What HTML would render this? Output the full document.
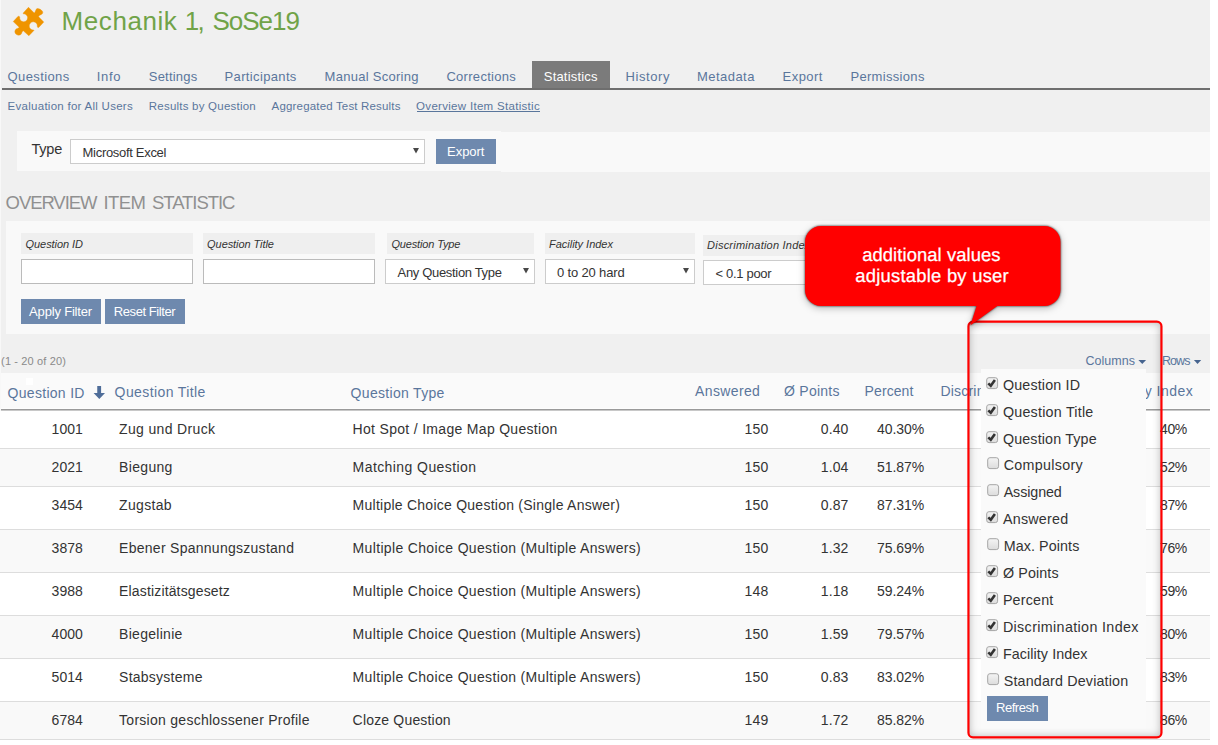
<!DOCTYPE html>
<html><head><meta charset="utf-8"><title>Overview Item Statistic</title>
<style>
html,body{margin:0;padding:0}
body{width:1218px;height:745px;position:relative;overflow:hidden;background:#f0f0f0;font-family:"Liberation Sans",sans-serif}
#p div,#p span,#p svg{position:absolute;display:block}
#p span{white-space:pre;line-height:1}
</style></head><body><div id="p">
<div style="left:0px;top:0px;width:1px;height:745px;background:#f8f8f8"></div>
<div style="left:1px;top:0px;width:1209px;height:745px;background:#f0f0f0"></div>
<div style="left:1210px;top:0px;width:8px;height:745px;background:#fff"></div>
<div style="left:532px;top:61px;width:78px;height:28px;background:#7b7b7b"></div>
<div style="left:2px;top:88px;width:1208px;height:2px;background:#6e6e6e"></div>
<div style="left:416.5px;top:111px;width:123px;height:1px;background:#5a769c"></div>
<div style="left:17px;top:131px;width:484px;height:40px;background:#f9f9f9"></div>
<div style="left:501px;top:132px;width:709px;height:40px;background:#f9f9f9"></div>
<div style="left:70px;top:139px;width:355px;height:25px;background:#fff;border:1px solid #ccc;box-sizing:border-box"></div>
<svg style="left:412.5px;top:148px" width="6" height="6"><path d="M0 0H6L3 5.5Z" fill="#484848"/></svg>
<div style="left:436px;top:139px;width:59.5px;height:25px;background:#6e89ae"></div>
<div style="left:6px;top:221px;width:1204px;height:113px;background:#f9f9f9"></div>
<div style="left:21px;top:233.2px;width:171.5px;height:21px;background:#efefef"></div>
<div style="left:202.5px;top:233.2px;width:172.0px;height:21px;background:#efefef"></div>
<div style="left:386.8px;top:233.2px;width:147.7px;height:21px;background:#efefef"></div>
<div style="left:545px;top:233.2px;width:149.5px;height:21px;background:#efefef"></div>
<div style="left:703px;top:234.5px;width:157px;height:21px;background:#efefef"></div>
<div style="left:21px;top:259px;width:171.5px;height:25px;background:#fff;border:1px solid #bbb;box-sizing:border-box"></div>
<div style="left:202.5px;top:259px;width:172px;height:25px;background:#fff;border:1px solid #bbb;box-sizing:border-box"></div>
<div style="left:385px;top:259px;width:149.5px;height:25px;background:#fff;border:1px solid #ccc;box-sizing:border-box"></div>
<div style="left:545px;top:259px;width:149.5px;height:25px;background:#fff;border:1px solid #ccc;box-sizing:border-box"></div>
<div style="left:703px;top:260px;width:149.5px;height:25px;background:#fff;border:1px solid #ccc;box-sizing:border-box"></div>
<svg style="left:522.7px;top:268px" width="6" height="6"><path d="M0 0H6L3 5.5Z" fill="#484848"/></svg>
<svg style="left:683px;top:268px" width="6" height="6"><path d="M0 0H6L3 5.5Z" fill="#484848"/></svg>
<div style="left:21px;top:299px;width:80px;height:25px;background:#6e89ae"></div>
<div style="left:104.8px;top:299px;width:80px;height:25px;background:#6e89ae"></div>
<svg style="left:1138px;top:360px" width="9" height="5"><path d="M0.4 0H8.1L4.25 4.1Z" fill="#46648f"/></svg>
<svg style="left:1193px;top:360px" width="9" height="5"><path d="M0.9 0H8.2L4.55 4.1Z" fill="#46648f"/></svg>
<div style="left:1px;top:373px;width:1209px;height:35px;background:#fafafa"></div>
<div style="left:1px;top:408px;width:1209px;height:1px;background:#fdfdfd"></div>
<div style="left:1px;top:409px;width:1209px;height:1px;background:#9a9a9a"></div>
<div style="left:1px;top:410px;width:1209px;height:1px;background:#c8c8c8"></div>
<div style="left:25.5px;top:378.3px;width:7px;height:7px;background:#fff"></div>
<div style="left:0px;top:411px;width:1210px;height:37px;background:#fff"></div>
<div style="left:0px;top:448px;width:1210px;height:1px;background:#ddd"></div>
<div style="left:0px;top:449px;width:1210px;height:37px;background:#f9f9f9"></div>
<div style="left:0px;top:486px;width:1210px;height:1px;background:#ddd"></div>
<div style="left:0px;top:487px;width:1210px;height:42px;background:#fff"></div>
<div style="left:0px;top:529px;width:1210px;height:1px;background:#ddd"></div>
<div style="left:0px;top:530px;width:1210px;height:42px;background:#f9f9f9"></div>
<div style="left:0px;top:572px;width:1210px;height:1px;background:#ddd"></div>
<div style="left:0px;top:573px;width:1210px;height:42px;background:#fff"></div>
<div style="left:0px;top:615px;width:1210px;height:1px;background:#ddd"></div>
<div style="left:0px;top:616px;width:1210px;height:42px;background:#f9f9f9"></div>
<div style="left:0px;top:658px;width:1210px;height:1px;background:#ddd"></div>
<div style="left:0px;top:659px;width:1210px;height:42px;background:#fff"></div>
<div style="left:0px;top:701px;width:1210px;height:1px;background:#ddd"></div>
<div style="left:0px;top:702px;width:1210px;height:37px;background:#f9f9f9"></div>
<div style="left:0px;top:739px;width:1210px;height:1px;background:#ddd"></div>
<div style="left:0px;top:740px;width:1210px;height:5px;background:#fff"></div>
<svg style="left:93px;top:386px" width="13" height="14" viewBox="0 0 13 14"><path d="M4.25 0H8.1V7.1H12L6.3 13L0.6 7.1H4.25Z" fill="#4f6d99"/></svg>
<svg style="left:10px;top:3px" width="37" height="37" viewBox="0 0 745 745"><path fill="#ef9400" stroke="#ef9400" stroke-width="8" stroke-linejoin="round" d="M372 86L488 202C508 188 514 150 532 122C556 98 626 126 654 168C672 204 650 228 612 240C590 248 578 262 576 278L680 385L578 492C562 501 552 492 550 472A82 82 0 1 0 478 543L481 554L380 660L268 560C248 568 242 590 232 615C215 658 150 658 117 625C87 590 92 545 130 520C160 508 180 500 186 488L65 375L160 270C178 262 192 268 196 285A80 80 0 1 0 268 219L266 202Z"/></svg>
<span style="left:61.6px;top:8.2px;font-size:26px;color:#70a348;letter-spacing:0.57px;">Mechanik</span>
<span style="left:184.8px;top:8.2px;font-size:26px;color:#70a348;letter-spacing:-1.69px;">1,</span>
<span style="left:212.4px;top:8.2px;font-size:26px;color:#70a348;letter-spacing:-1.01px;">SoSe19</span>
<span style="left:7.6px;top:70.2px;font-size:13px;color:#5a769c;letter-spacing:0.38px;">Questions</span>
<span style="left:96.8px;top:70.2px;font-size:13px;color:#5a769c;letter-spacing:0.70px;">Info</span>
<span style="left:148.8px;top:70.2px;font-size:13px;color:#5a769c;letter-spacing:0.20px;">Settings</span>
<span style="left:224.6px;top:70.2px;font-size:13px;color:#5a769c;letter-spacing:0.35px;">Participants</span>
<span style="left:324.6px;top:70.2px;font-size:13px;color:#5a769c;letter-spacing:0.27px;">Manual Scoring</span>
<span style="left:446.4px;top:70.2px;font-size:13px;color:#5a769c;letter-spacing:0.30px;">Corrections</span>
<span style="left:543.8px;top:70.2px;font-size:13px;color:#fff;letter-spacing:0.18px;">Statistics</span>
<span style="left:625.6px;top:70.2px;font-size:13px;color:#5a769c;letter-spacing:0.56px;">History</span>
<span style="left:697.1px;top:70.2px;font-size:13px;color:#5a769c;letter-spacing:0.44px;">Metadata</span>
<span style="left:782.6px;top:70.2px;font-size:13px;color:#5a769c;letter-spacing:0.44px;">Export</span>
<span style="left:850.4px;top:70.2px;font-size:13px;color:#5a769c;letter-spacing:0.32px;">Permissions</span>
<span style="left:7.6px;top:100.5px;font-size:11.5px;color:#5a769c;letter-spacing:0.27px;">Evaluation for All Users</span>
<span style="left:148.8px;top:100.5px;font-size:11.5px;color:#5a769c;letter-spacing:0.22px;">Results by Question</span>
<span style="left:271.6px;top:100.5px;font-size:11.5px;color:#5a769c;letter-spacing:0.17px;">Aggregated Test Results</span>
<span style="left:416.1px;top:100.5px;font-size:11.5px;color:#5a769c;letter-spacing:0.30px;">Overview Item Statistic</span>
<span style="left:31.4px;top:141.9px;font-size:14.5px;color:#333;letter-spacing:-0.21px;">Type</span>
<span style="left:82.6px;top:146.2px;font-size:13px;color:#333;letter-spacing:-0.31px;">Microsoft Excel</span>
<span style="left:447.1px;top:145.2px;font-size:13px;color:#fff;letter-spacing:-0.06px;">Export</span>
<span style="left:5.6px;top:193.5px;font-size:18.5px;color:#909090;letter-spacing:-1.08px;">OVERVIEW</span>
<span style="left:103.6px;top:193.5px;font-size:18.5px;color:#909090;letter-spacing:-0.63px;">ITEM</span>
<span style="left:152.1px;top:193.5px;font-size:18.5px;color:#909090;letter-spacing:-1.07px;">STATISTIC</span>
<span style="left:25.6px;top:238.9px;font-size:11px;color:#333;letter-spacing:-0.08px;font-style:italic">Question ID</span>
<span style="left:207.1px;top:238.9px;font-size:11px;color:#333;letter-spacing:-0.07px;font-style:italic">Question Title</span>
<span style="left:391.4px;top:238.9px;font-size:11px;color:#333;letter-spacing:-0.14px;font-style:italic">Question Type</span>
<span style="left:549.1px;top:238.9px;font-size:11px;color:#333;letter-spacing:-0.03px;font-style:italic">Facility Index</span>
<span style="left:707.1px;top:239.9px;font-size:11px;color:#333;letter-spacing:0.22px;font-style:italic">Discrimination Index</span>
<span style="left:397.6px;top:266.2px;font-size:13px;color:#333;letter-spacing:-0.33px;">Any Question Type</span>
<span style="left:557.1px;top:266.2px;font-size:13px;color:#333;letter-spacing:-0.17px;">0 to 20 hard</span>
<span style="left:715.4px;top:267.2px;font-size:13px;color:#333;letter-spacing:-0.30px;">&lt; 0.1 poor</span>
<span style="left:29.1px;top:305.2px;font-size:13px;color:#fff;letter-spacing:-0.18px;">Apply Filter</span>
<span style="left:113.8px;top:305.2px;font-size:13px;color:#fff;letter-spacing:-0.42px;">Reset Filter</span>
<span style="left:1.1px;top:355.9px;font-size:11px;color:#8a8a8a;letter-spacing:0.14px;">(1 - 20 of 20)</span>
<span style="left:1085.4px;top:354.6px;font-size:12.5px;color:#5a769c;letter-spacing:0.03px;">Columns</span>
<span style="left:1161.9px;top:354.6px;font-size:12.5px;color:#5a769c;letter-spacing:-0.92px;">Rows</span>
<span style="left:7.6px;top:386.3px;font-size:14px;color:#5a769c;letter-spacing:0.29px;">Question ID</span>
<span style="left:114.6px;top:385.3px;font-size:14px;color:#5a769c;letter-spacing:0.40px;">Question Title</span>
<span style="left:350.6px;top:386.3px;font-size:14px;color:#5a769c;letter-spacing:0.31px;">Question Type</span>
<span style="left:695.1px;top:384.3px;font-size:14px;color:#5a769c;letter-spacing:0.36px;">Answered</span>
<span style="left:784.1px;top:384.3px;font-size:14px;color:#5a769c;letter-spacing:0.23px;">Ø Points</span>
<span style="left:864.6px;top:384.3px;font-size:14px;color:#5a769c;letter-spacing:0.09px;">Percent</span>
<span style="left:940.4px;top:384.3px;font-size:14px;color:#5a769c;letter-spacing:0.21px;">Discrimination Index</span>
<span style="left:1105.1px;top:384.3px;font-size:14px;color:#5a769c;letter-spacing:0.45px;">Facility Index</span>
<span style="left:51.6px;top:422.3px;font-size:14px;color:#333;letter-spacing:0.05px;">1001</span>
<span style="left:119.1px;top:422.3px;font-size:14px;color:#333;letter-spacing:0.34px;">Zug und Druck</span>
<span style="left:352.6px;top:422.3px;font-size:14px;color:#333;letter-spacing:0.31px;">Hot Spot / Image Map Question</span>
<span style="left:744.6px;top:422.3px;font-size:14px;color:#333;letter-spacing:0.22px;">150</span>
<span style="left:820.8px;top:422.3px;font-size:14px;color:#333;letter-spacing:0.12px;">0.40</span>
<span style="left:877.1px;top:422.3px;font-size:14px;color:#333;letter-spacing:-0.08px;">40.30%</span>
<span style="left:1160.1px;top:422.3px;font-size:14px;color:#333;letter-spacing:-0.47px;">40%</span>
<span style="left:51.6px;top:460.3px;font-size:14px;color:#333;letter-spacing:0.05px;">2021</span>
<span style="left:119.1px;top:460.3px;font-size:14px;color:#333;letter-spacing:0.32px;">Biegung</span>
<span style="left:352.6px;top:460.3px;font-size:14px;color:#333;letter-spacing:0.42px;">Matching Question</span>
<span style="left:744.6px;top:460.3px;font-size:14px;color:#333;letter-spacing:0.22px;">150</span>
<span style="left:820.8px;top:460.3px;font-size:14px;color:#333;letter-spacing:0.12px;">1.04</span>
<span style="left:877.1px;top:460.3px;font-size:14px;color:#333;letter-spacing:-0.08px;">51.87%</span>
<span style="left:1160.1px;top:460.3px;font-size:14px;color:#333;letter-spacing:-0.47px;">52%</span>
<span style="left:51.6px;top:498.3px;font-size:14px;color:#333;letter-spacing:0.05px;">3454</span>
<span style="left:119.1px;top:498.3px;font-size:14px;color:#333;letter-spacing:0.32px;">Zugstab</span>
<span style="left:352.6px;top:498.3px;font-size:14px;color:#333;letter-spacing:0.25px;">Multiple Choice Question (Single Answer)</span>
<span style="left:744.6px;top:498.3px;font-size:14px;color:#333;letter-spacing:0.22px;">150</span>
<span style="left:820.8px;top:498.3px;font-size:14px;color:#333;letter-spacing:0.12px;">0.87</span>
<span style="left:877.1px;top:498.3px;font-size:14px;color:#333;letter-spacing:-0.08px;">87.31%</span>
<span style="left:1160.1px;top:498.3px;font-size:14px;color:#333;letter-spacing:-0.47px;">87%</span>
<span style="left:51.6px;top:541.3px;font-size:14px;color:#333;letter-spacing:0.05px;">3878</span>
<span style="left:119.1px;top:541.3px;font-size:14px;color:#333;letter-spacing:0.27px;">Ebener Spannungszustand</span>
<span style="left:352.6px;top:541.3px;font-size:14px;color:#333;letter-spacing:0.34px;">Multiple Choice Question (Multiple Answers)</span>
<span style="left:744.6px;top:541.3px;font-size:14px;color:#333;letter-spacing:0.22px;">150</span>
<span style="left:820.8px;top:541.3px;font-size:14px;color:#333;letter-spacing:0.12px;">1.32</span>
<span style="left:877.1px;top:541.3px;font-size:14px;color:#333;letter-spacing:-0.08px;">75.69%</span>
<span style="left:1160.1px;top:541.3px;font-size:14px;color:#333;letter-spacing:-0.47px;">76%</span>
<span style="left:51.6px;top:584.3px;font-size:14px;color:#333;letter-spacing:0.05px;">3988</span>
<span style="left:119.1px;top:584.3px;font-size:14px;color:#333;letter-spacing:0.15px;">Elastizitätsgesetz</span>
<span style="left:352.6px;top:584.3px;font-size:14px;color:#333;letter-spacing:0.34px;">Multiple Choice Question (Multiple Answers)</span>
<span style="left:744.6px;top:584.3px;font-size:14px;color:#333;letter-spacing:0.22px;">148</span>
<span style="left:820.8px;top:584.3px;font-size:14px;color:#333;letter-spacing:0.12px;">1.18</span>
<span style="left:877.1px;top:584.3px;font-size:14px;color:#333;letter-spacing:-0.08px;">59.24%</span>
<span style="left:1160.1px;top:584.3px;font-size:14px;color:#333;letter-spacing:-0.47px;">59%</span>
<span style="left:51.6px;top:627.3px;font-size:14px;color:#333;letter-spacing:0.05px;">4000</span>
<span style="left:119.1px;top:627.3px;font-size:14px;color:#333;letter-spacing:0.28px;">Biegelinie</span>
<span style="left:352.6px;top:627.3px;font-size:14px;color:#333;letter-spacing:0.34px;">Multiple Choice Question (Multiple Answers)</span>
<span style="left:744.6px;top:627.3px;font-size:14px;color:#333;letter-spacing:0.22px;">150</span>
<span style="left:820.8px;top:627.3px;font-size:14px;color:#333;letter-spacing:0.12px;">1.59</span>
<span style="left:877.1px;top:627.3px;font-size:14px;color:#333;letter-spacing:-0.08px;">79.57%</span>
<span style="left:1160.1px;top:627.3px;font-size:14px;color:#333;letter-spacing:-0.47px;">80%</span>
<span style="left:51.6px;top:670.3px;font-size:14px;color:#333;letter-spacing:0.05px;">5014</span>
<span style="left:119.1px;top:670.3px;font-size:14px;color:#333;letter-spacing:0.24px;">Stabsysteme</span>
<span style="left:352.6px;top:670.3px;font-size:14px;color:#333;letter-spacing:0.34px;">Multiple Choice Question (Multiple Answers)</span>
<span style="left:744.6px;top:670.3px;font-size:14px;color:#333;letter-spacing:0.22px;">150</span>
<span style="left:820.8px;top:670.3px;font-size:14px;color:#333;letter-spacing:0.12px;">0.83</span>
<span style="left:877.1px;top:670.3px;font-size:14px;color:#333;letter-spacing:-0.08px;">83.02%</span>
<span style="left:1160.1px;top:670.3px;font-size:14px;color:#333;letter-spacing:-0.47px;">83%</span>
<span style="left:51.6px;top:713.3px;font-size:14px;color:#333;letter-spacing:0.05px;">6784</span>
<span style="left:119.1px;top:713.3px;font-size:14px;color:#333;letter-spacing:0.27px;">Torsion geschlossener Profile</span>
<span style="left:352.6px;top:713.3px;font-size:14px;color:#333;letter-spacing:0.18px;">Cloze Question</span>
<span style="left:744.6px;top:713.3px;font-size:14px;color:#333;letter-spacing:0.22px;">149</span>
<span style="left:820.8px;top:713.3px;font-size:14px;color:#333;letter-spacing:0.12px;">1.72</span>
<span style="left:877.1px;top:713.3px;font-size:14px;color:#333;letter-spacing:-0.08px;">85.82%</span>
<span style="left:1160.1px;top:713.3px;font-size:14px;color:#333;letter-spacing:-0.47px;">86%</span>
<div style="left:981px;top:369px;width:165px;height:360px;background:#fafafa"></div>
<svg style="left:986px;top:377px" width="13" height="13" viewBox="0 0 13 13"><defs><linearGradient id="g0" x1="0" y1="0" x2="0" y2="1"><stop offset="0" stop-color="#f4f4f4"/><stop offset="1" stop-color="#dcdcdc"/></linearGradient></defs><rect x="0.7" y="0.7" width="10.9" height="10.9" rx="2.3" fill="url(#g0)" stroke="#a6a6a6"/><path d="M2.3 6.3L4.8 8.8L8.9 3.1" stroke="#333" stroke-width="2.6" fill="none"/></svg>
<svg style="left:986px;top:404px" width="13" height="13" viewBox="0 0 13 13"><defs><linearGradient id="g1" x1="0" y1="0" x2="0" y2="1"><stop offset="0" stop-color="#f4f4f4"/><stop offset="1" stop-color="#dcdcdc"/></linearGradient></defs><rect x="0.7" y="0.7" width="10.9" height="10.9" rx="2.3" fill="url(#g1)" stroke="#a6a6a6"/><path d="M2.3 6.3L4.8 8.8L8.9 3.1" stroke="#333" stroke-width="2.6" fill="none"/></svg>
<svg style="left:986px;top:431px" width="13" height="13" viewBox="0 0 13 13"><defs><linearGradient id="g2" x1="0" y1="0" x2="0" y2="1"><stop offset="0" stop-color="#f4f4f4"/><stop offset="1" stop-color="#dcdcdc"/></linearGradient></defs><rect x="0.7" y="0.7" width="10.9" height="10.9" rx="2.3" fill="url(#g2)" stroke="#a6a6a6"/><path d="M2.3 6.3L4.8 8.8L8.9 3.1" stroke="#333" stroke-width="2.6" fill="none"/></svg>
<svg style="left:987px;top:457px" width="13" height="13" viewBox="0 0 13 13"><defs><linearGradient id="g3" x1="0" y1="0" x2="0" y2="1"><stop offset="0" stop-color="#f4f4f4"/><stop offset="1" stop-color="#dcdcdc"/></linearGradient></defs><rect x="0.7" y="0.7" width="10.9" height="10.9" rx="2.3" fill="url(#g3)" stroke="#a6a6a6"/></svg>
<svg style="left:987px;top:484px" width="13" height="13" viewBox="0 0 13 13"><defs><linearGradient id="g4" x1="0" y1="0" x2="0" y2="1"><stop offset="0" stop-color="#f4f4f4"/><stop offset="1" stop-color="#dcdcdc"/></linearGradient></defs><rect x="0.7" y="0.7" width="10.9" height="10.9" rx="2.3" fill="url(#g4)" stroke="#a6a6a6"/></svg>
<svg style="left:986px;top:511px" width="13" height="13" viewBox="0 0 13 13"><defs><linearGradient id="g5" x1="0" y1="0" x2="0" y2="1"><stop offset="0" stop-color="#f4f4f4"/><stop offset="1" stop-color="#dcdcdc"/></linearGradient></defs><rect x="0.7" y="0.7" width="10.9" height="10.9" rx="2.3" fill="url(#g5)" stroke="#a6a6a6"/><path d="M2.3 6.3L4.8 8.8L8.9 3.1" stroke="#333" stroke-width="2.6" fill="none"/></svg>
<svg style="left:987px;top:538px" width="13" height="13" viewBox="0 0 13 13"><defs><linearGradient id="g6" x1="0" y1="0" x2="0" y2="1"><stop offset="0" stop-color="#f4f4f4"/><stop offset="1" stop-color="#dcdcdc"/></linearGradient></defs><rect x="0.7" y="0.7" width="10.9" height="10.9" rx="2.3" fill="url(#g6)" stroke="#a6a6a6"/></svg>
<svg style="left:986px;top:565px" width="13" height="13" viewBox="0 0 13 13"><defs><linearGradient id="g7" x1="0" y1="0" x2="0" y2="1"><stop offset="0" stop-color="#f4f4f4"/><stop offset="1" stop-color="#dcdcdc"/></linearGradient></defs><rect x="0.7" y="0.7" width="10.9" height="10.9" rx="2.3" fill="url(#g7)" stroke="#a6a6a6"/><path d="M2.3 6.3L4.8 8.8L8.9 3.1" stroke="#333" stroke-width="2.6" fill="none"/></svg>
<svg style="left:986px;top:592px" width="13" height="13" viewBox="0 0 13 13"><defs><linearGradient id="g8" x1="0" y1="0" x2="0" y2="1"><stop offset="0" stop-color="#f4f4f4"/><stop offset="1" stop-color="#dcdcdc"/></linearGradient></defs><rect x="0.7" y="0.7" width="10.9" height="10.9" rx="2.3" fill="url(#g8)" stroke="#a6a6a6"/><path d="M2.3 6.3L4.8 8.8L8.9 3.1" stroke="#333" stroke-width="2.6" fill="none"/></svg>
<svg style="left:986px;top:619px" width="13" height="13" viewBox="0 0 13 13"><defs><linearGradient id="g9" x1="0" y1="0" x2="0" y2="1"><stop offset="0" stop-color="#f4f4f4"/><stop offset="1" stop-color="#dcdcdc"/></linearGradient></defs><rect x="0.7" y="0.7" width="10.9" height="10.9" rx="2.3" fill="url(#g9)" stroke="#a6a6a6"/><path d="M2.3 6.3L4.8 8.8L8.9 3.1" stroke="#333" stroke-width="2.6" fill="none"/></svg>
<svg style="left:986px;top:646px" width="13" height="13" viewBox="0 0 13 13"><defs><linearGradient id="g10" x1="0" y1="0" x2="0" y2="1"><stop offset="0" stop-color="#f4f4f4"/><stop offset="1" stop-color="#dcdcdc"/></linearGradient></defs><rect x="0.7" y="0.7" width="10.9" height="10.9" rx="2.3" fill="url(#g10)" stroke="#a6a6a6"/><path d="M2.3 6.3L4.8 8.8L8.9 3.1" stroke="#333" stroke-width="2.6" fill="none"/></svg>
<svg style="left:987px;top:673px" width="13" height="13" viewBox="0 0 13 13"><defs><linearGradient id="g11" x1="0" y1="0" x2="0" y2="1"><stop offset="0" stop-color="#f4f4f4"/><stop offset="1" stop-color="#dcdcdc"/></linearGradient></defs><rect x="0.7" y="0.7" width="10.9" height="10.9" rx="2.3" fill="url(#g11)" stroke="#a6a6a6"/></svg>
<div style="left:987px;top:696px;width:61px;height:25px;background:#6e89ae"></div>
<span style="left:1002.9px;top:378.1px;font-size:14.3px;color:#333;letter-spacing:0.16px;">Question ID</span>
<span style="left:1002.9px;top:405.1px;font-size:14.3px;color:#333;letter-spacing:0.23px;">Question Title</span>
<span style="left:1002.9px;top:432.1px;font-size:14.3px;color:#333;letter-spacing:0.15px;">Question Type</span>
<span style="left:1003.7px;top:458.1px;font-size:14.3px;color:#333;letter-spacing:0.31px;">Compulsory</span>
<span style="left:1003.7px;top:485.1px;font-size:14.3px;color:#333;letter-spacing:-0.10px;">Assigned</span>
<span style="left:1002.9px;top:512.1px;font-size:14.3px;color:#333;letter-spacing:0.25px;">Answered</span>
<span style="left:1003.7px;top:539.1px;font-size:14.3px;color:#333;letter-spacing:0.09px;">Max. Points</span>
<span style="left:1002.9px;top:566.1px;font-size:14.3px;color:#333;letter-spacing:0.12px;">Ø Points</span>
<span style="left:1002.9px;top:593.1px;font-size:14.3px;color:#333;letter-spacing:0.19px;">Percent</span>
<span style="left:1002.9px;top:620.1px;font-size:14.3px;color:#333;letter-spacing:0.36px;">Discrimination Index</span>
<span style="left:1002.9px;top:647.1px;font-size:14.3px;color:#333;letter-spacing:0.09px;">Facility Index</span>
<span style="left:1003.7px;top:674.1px;font-size:14.3px;color:#333;letter-spacing:0.17px;">Standard Deviation</span>
<span style="left:996.0px;top:701.2px;font-size:13px;color:#fff;letter-spacing:-0.46px;">Refresh</span>
<div style="left:969px;top:322px;width:192px;height:415px;border-radius:4px;box-shadow:inset 0 0 9px rgba(0,0,0,.3)"></div>
<svg style="left:960px;top:315px" width="210" height="430" viewBox="960 315 210 430"><rect x="968.45" y="321.6" width="193" height="415.8" rx="4.6" fill="none" stroke="#ff0000" stroke-width="2.2"/></svg>
<svg style="left:790px;top:215px" width="290" height="125" viewBox="790 215 290 125"><defs><filter id="sh" x="-10%" y="-10%" width="120%" height="130%"><feDropShadow dx="0" dy="0.6" stdDeviation="1.1" flood-color="#000" flood-opacity=".85"/></filter></defs><path style="filter:drop-shadow(0 0.5px 0.9px rgba(0,0,0,.8)) drop-shadow(0 2px 3.5px rgba(0,0,0,.25))" fill="#ff0000" d="M821 226H1044.500A16 16 0 0 1 1060.500 242V290A16 16 0 0 1 1044.500 306H997.300L970.300 325.500L976.600 306H821A16 16 0 0 1 805 290V242A16 16 0 0 1 821 226Z"/></svg>
<svg style="left:800px;top:220px" width="270" height="90" viewBox="800 220 270 90"><g font-family="Liberation Sans, sans-serif" font-size="18.4" fill="#fff" stroke="#fff" stroke-width="0.25" text-rendering="geometricPrecision"><text x="862.2" y="260.6" letter-spacing="0.08">additional values</text><text x="855.2" y="281.9" letter-spacing="0.25">adjustable by user</text></g></svg>
</div></body></html>
